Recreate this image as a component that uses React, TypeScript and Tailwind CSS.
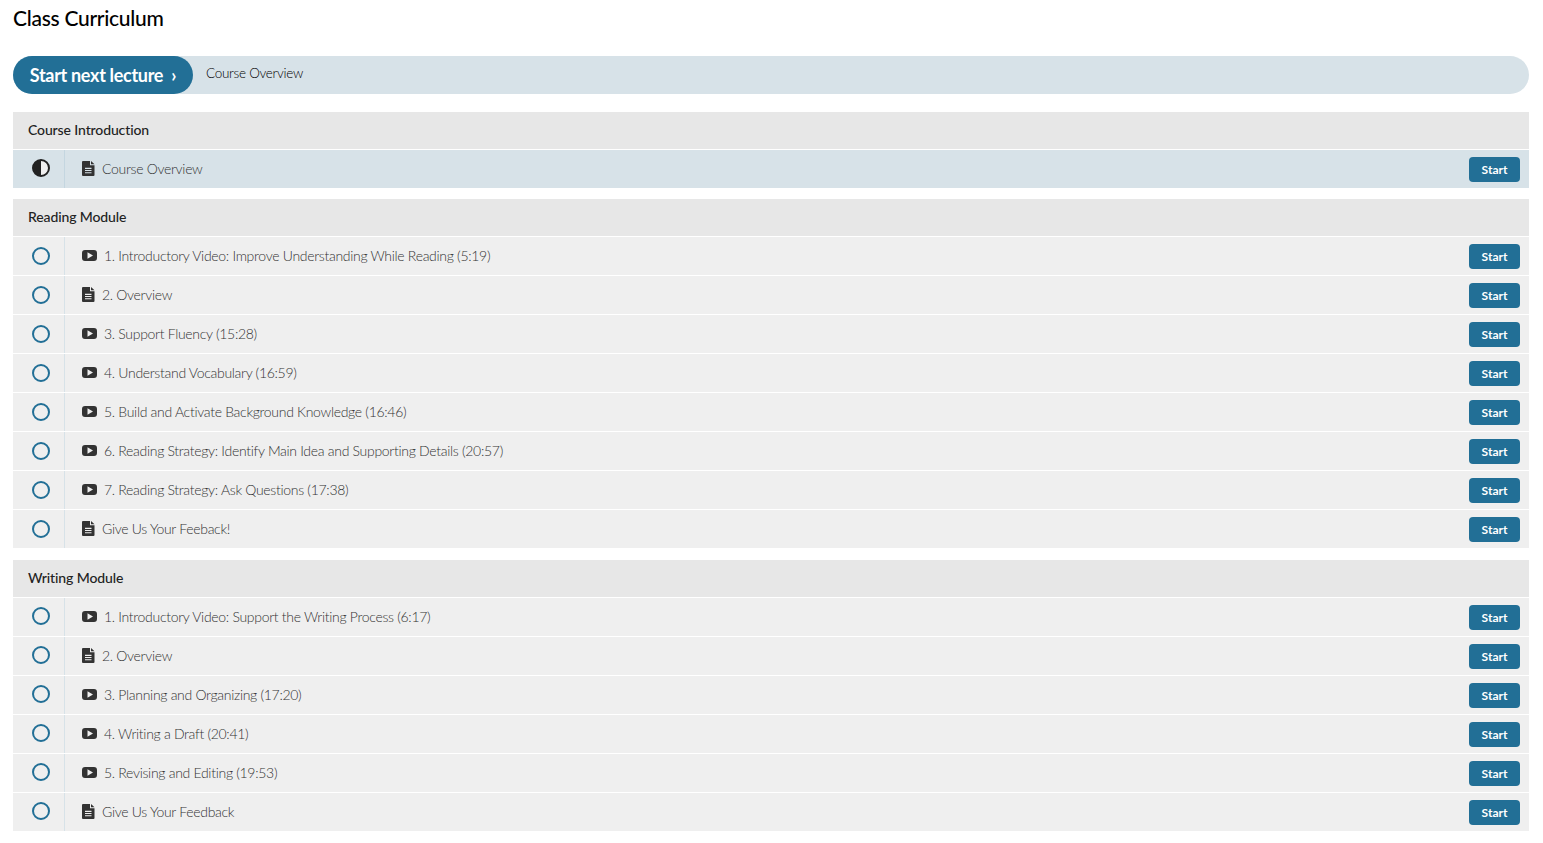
const font = { fontFamily: "Lato, sans-serif" };

type Lecture = { kind: "video" | "doc"; title: string };

const sections: { name: string; gapClass: string; statusPad: string; active?: boolean; lectures: Lecture[] }[] = [
  {
    name: "Course Introduction",
    gapClass: "mb-[11px]",
    statusPad: "pb-[2px]",
    active: true,
    lectures: [{ kind: "doc", title: "Course Overview" }],
  },
  {
    name: "Reading Module",
    gapClass: "mb-3",
    statusPad: "pb-0",
    lectures: [
      { kind: "video", title: "1. Introductory Video: Improve Understanding While Reading (5:19)" },
      { kind: "doc", title: "2. Overview" },
      { kind: "video", title: "3. Support Fluency (15:28)" },
      { kind: "video", title: "4. Understand Vocabulary (16:59)" },
      { kind: "video", title: "5. Build and Activate Background Knowledge (16:46)" },
      { kind: "video", title: "6. Reading Strategy: Identify Main Idea and Supporting Details (20:57)" },
      { kind: "video", title: "7. Reading Strategy: Ask Questions (17:38)" },
      { kind: "doc", title: "Give Us Your Feeback!" },
    ],
  },
  {
    name: "Writing Module",
    gapClass: "mb-0",
    statusPad: "pb-[2px]",
    lectures: [
      { kind: "video", title: "1. Introductory Video: Support the Writing Process (6:17)" },
      { kind: "doc", title: "2. Overview" },
      { kind: "video", title: "3. Planning and Organizing (17:20)" },
      { kind: "video", title: "4. Writing a Draft (20:41)" },
      { kind: "video", title: "5. Revising and Editing (19:53)" },
      { kind: "doc", title: "Give Us Your Feedback" },
    ],
  },
];

function DocIcon() {
  return (
    <svg width="13" height="15" viewBox="0 0 13 15" className="shrink-0">
      <path
        fill="#333"
        fillRule="evenodd"
        d="M1 0h7v4.200h4.500V14a1 1 0 0 1-1 1H1a1 1 0 0 1-1-1V1a1 1 0 0 1 1-1zM9 0l3.500 3.300H9zM3 6.800v1.100h6.500V6.800zM3 9v1.100h6.500V9zM3 11.200v1.100h6.500v-1.100z"
      />
    </svg>
  );
}

function VideoIcon() {
  return (
    <svg width="15" height="11" viewBox="0 0 15 11" className="shrink-0">
      <path
        fill="#333"
        fillRule="evenodd"
        d="M3 0h9a3 3 0 0 1 3 3v5a3 3 0 0 1-3 3H3a3 3 0 0 1-3-3V3a3 3 0 0 1 3-3zM5.500 2.200v6.600l5.500-3.300z"
      />
    </svg>
  );
}

function Status({ active }: { active?: boolean }) {
  if (active) {
    return (
      <svg width="18" height="18" viewBox="0 0 18 18">
        <circle cx="9" cy="9" r="8" fill="#f0f0f0" stroke="#222" strokeWidth="2" />
        <path d="M9 1a8 8 0 0 0 0 16z" fill="#222" />
      </svg>
    );
  }
  return (
    <svg width="18" height="18" viewBox="0 0 18 18">
      <circle cx="9" cy="9" r="8" fill="none" stroke="#226f96" strokeWidth="2" />
    </svg>
  );
}

function Row({
  lecture,
  active,
  last,
  statusPad,
}: {
  lecture: Lecture;
  active?: boolean;
  last: boolean;
  statusPad: string;
}) {
  return (
    <div
      className={`flex items-stretch ${last ? "h-[38px]" : "h-[39px] border-b border-white"} ${
        active ? "bg-[#d7e2e8]" : "bg-[#efefef]"
      }`}
    >
      <div
        className={`w-[52px] shrink-0 flex items-center justify-center border-r pl-[4px] ${statusPad} ${
          active ? "border-[#c4d6e0]" : "border-[#d7e2e8]"
        }`}
      >
        <Status active={active} />
      </div>
      <div className="flex-1 flex items-center pl-[17px] pb-[2px]">
        {lecture.kind === "doc" ? <DocIcon /> : <VideoIcon />}
        <span className="ml-[7px] text-[14px] font-light text-[#333] tracking-[-0.3px]">{lecture.title}</span>
      </div>
      <div className="flex items-center pr-[9px]">
        <button className="w-[51px] h-[25px] rounded-[4px] bg-[#226f96] text-white text-[12px] font-bold pt-[2px]">
          Start
        </button>
      </div>
    </div>
  );
}

export default function App() {
  return (
    <div style={font} className="bg-white min-h-screen pl-[13px] pr-[14px] pt-[4px] text-black overflow-hidden">
      <h2 className="text-[21px] leading-[28px] font-medium tracking-[-0.28px] mb-[24px]">Class Curriculum</h2>

      {/* next lecture bar */}
      <div className="flex items-center h-[38px] rounded-full bg-[#d7e2e8] mb-[18px]">
        <button className="w-[180px] h-full rounded-full bg-[#226f96] text-white text-[18px] font-bold tracking-[-0.3px] pt-[1px]">
          Start next lecture &nbsp;›
        </button>
        <span className="ml-[13px] pb-[4px] text-[13.5px] font-light text-black tracking-[-0.28px]">
          Course Overview
        </span>
      </div>

      {sections.map((section) => (
        <div key={section.name} className={section.gapClass}>
          <div className="h-[38px] flex items-center pl-[15px] pb-[2px] bg-[#e7e7e7] border-b border-white text-[14px] font-medium text-[#222] tracking-[-0.12px]">
            {section.name}
          </div>
          {section.lectures.map((lecture, i) => (
            <Row
              key={lecture.title}
              lecture={lecture}
              active={section.active}
              last={i === section.lectures.length - 1}
              statusPad={section.statusPad}
            />
          ))}
        </div>
      ))}
    </div>
  );
}
